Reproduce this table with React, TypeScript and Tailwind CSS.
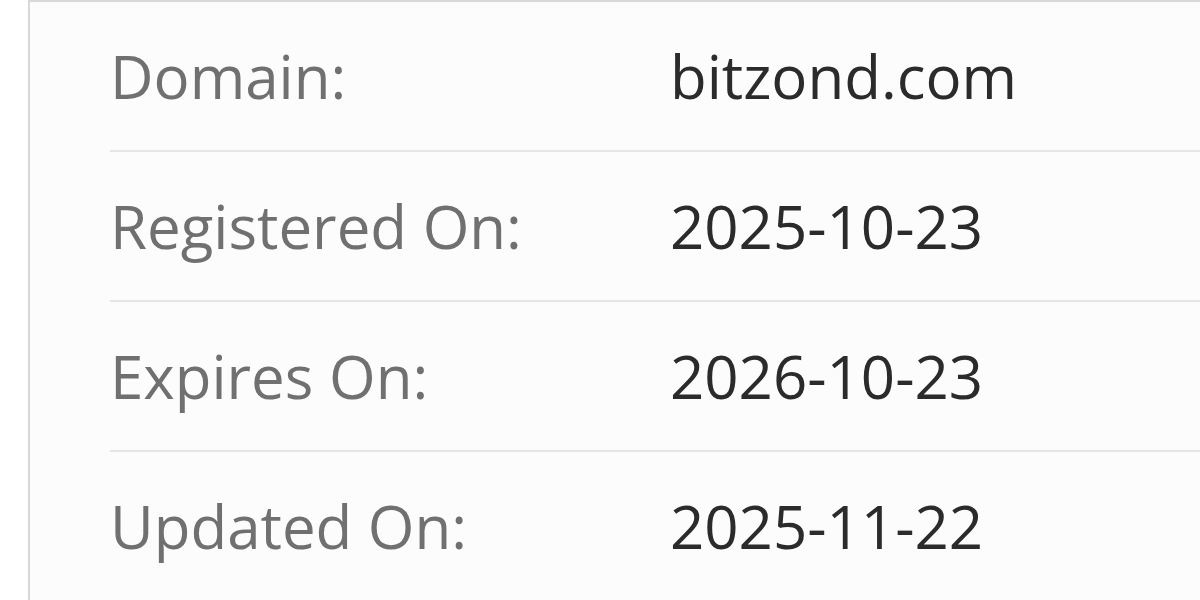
import React from "react";

const rows = [
  { label: "Domain:", value: "bitzond.com" },
  { label: "Registered On:", value: "2025-10-23" },
  { label: "Expires On:", value: "2026-10-23" },
  { label: "Updated On:", value: "2025-11-22" },
];

export default function App() {
  return (
    <div
      className="w-[1200px] h-[600px] overflow-hidden bg-white pl-[28px]"
      style={{ fontFamily: '"Open Sans", sans-serif' }}
    >
      <div className="h-full border-l-2 border-t-2 border-[#d8d8d8] bg-[#fcfcfc] pl-[80px]">
        {rows.map((r) => (
          <div
            key={r.label}
            className="flex items-center h-[150px] border-b-2 border-[#e6e6e6]"
          >
            <div className="w-[560px] text-[60px] text-[#707070]">{r.label}</div>
            <div className="text-[60px] text-[#2b2b2b]">{r.value}</div>
          </div>
        ))}
      </div>
    </div>
  );
}
